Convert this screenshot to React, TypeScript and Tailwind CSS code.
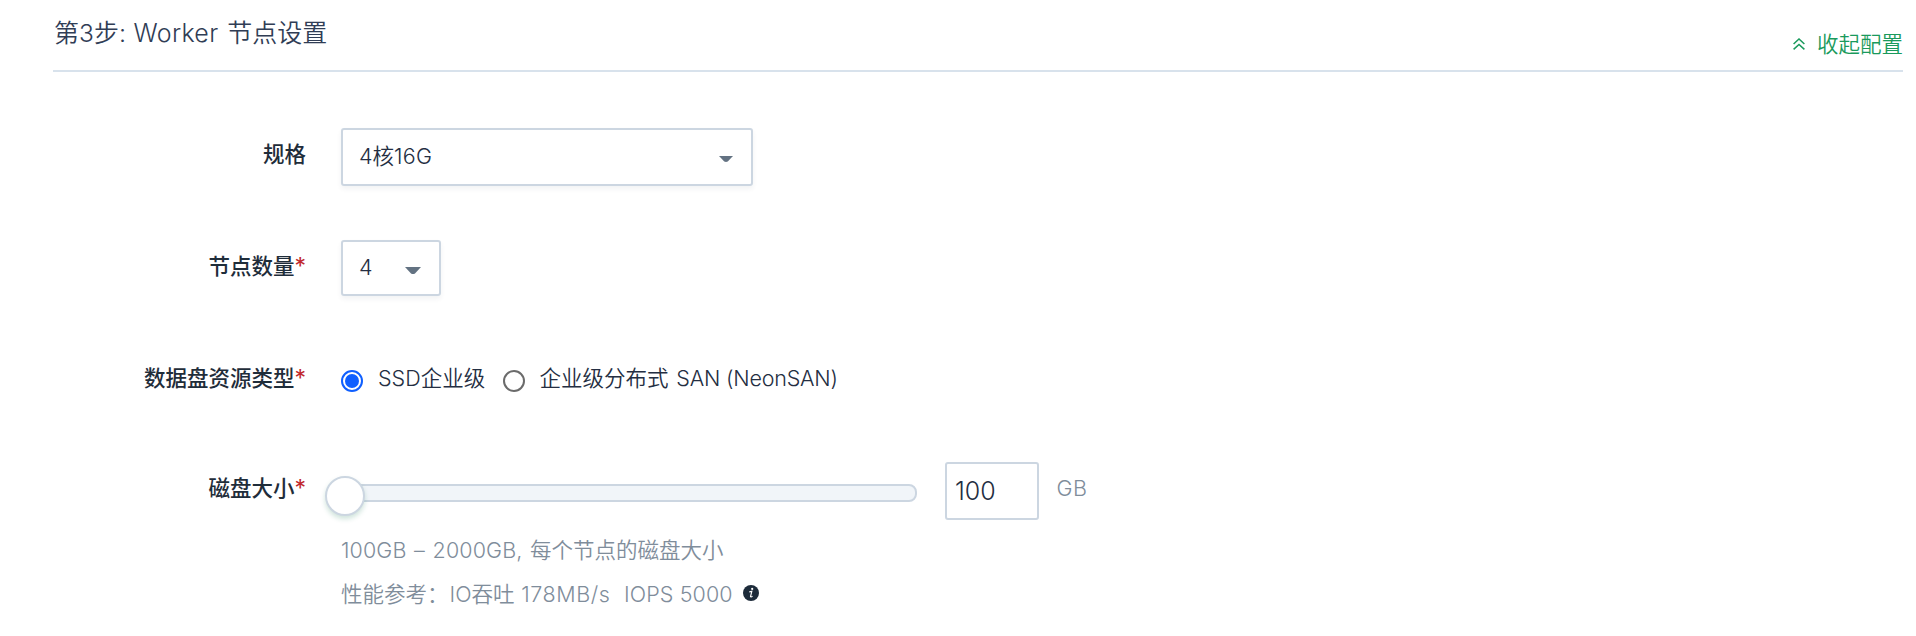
import type { ReactNode } from "react";

function Caret({ className }: { className: string }) {
  return (
    <svg viewBox="0 0 16 7" preserveAspectRatio="none" className={className} fill="#637282">
      <path d="M0 0h16L10 6.4Q8 7.4 6 6.4Z" />
    </svg>
  );
}

function Row({ label, required, className, children }: { label: string; required?: boolean; className: string; children: ReactNode }) {
  return (
    <div className={`flex items-start ${className}`}>
      <div className="flex h-8 w-[306px] shrink-0 items-center justify-end font-medium text-[#1f2d3a]">
        {label}
        {required && <span className="w-[11.5px] text-[23px] font-normal text-[#c1272d]">*</span>}
      </div>
      <div className="ml-[35px] flex grow items-start">{children}</div>
    </div>
  );
}

export default function App() {
  return (
    <div className="h-[636px] overflow-hidden bg-white font-['Inter','Noto_Sans_CJK_SC',sans-serif] text-[21.5px] leading-8 font-[350] whitespace-pre text-[#242e42]">
      <header className="ml-[53px] flex h-[72px] w-[1850px] items-start justify-between border-b-2 border-[#d8e2ec]">
        <h1 className="pt-[17px] pl-[1px] text-[25px] font-[350] text-[#303d55]">
          第<span className="text-[24.5px]">3</span>步<span className="tracking-[0.3px]">: Worker </span><span className="ml-[1.5px]">节点设置</span>
        </h1>
        <button className="flex items-center pt-[28px] font-[350] text-[#1a9a5c]">
          <svg viewBox="0 0 12 12" className="mr-3 size-3" fill="none" stroke="currentColor" strokeWidth="1.5">
            <path d="M.6 6 6 1l5.4 5M.6 11.4 6 6.4l5.4 5" />
          </svg>
          收起配置
        </button>
      </header>

      <Row label="规格" className="mt-[56px] h-[112px] [&>div:first-child]:mt-[10px]">
        <div className="flex h-[58px] w-[412px] items-center justify-between rounded-[3px] border-2 border-[#ccd6e1] pr-[18px] pl-[16px] shadow-[0_3px_5px_rgba(36,46,66,0.06)]">
          <span className="-mt-[2px]">4核<span className="tracking-[0.3px]">16G</span></span>
          <Caret className="mt-[4px] h-[6px] w-[14px]" />
        </div>
      </Row>

      <Row label="节点数量" required className="h-[122px] [&>div:first-child]:mt-[10px]">
        <div className="flex h-[56px] w-[100px] items-center justify-between rounded-[3px] border-2 border-[#ccd6e1] pr-[18px] pl-[16px] shadow-[0_3px_5px_rgba(36,46,66,0.06)]">
          <span className="-mt-[3px]">4</span>
          <Caret className="mt-[5px] h-[7px] w-[16px]" />
        </div>
      </Row>

      <Row label="数据盘资源类型" required className="h-[100px]">
        <span className="mt-[8px] flex size-[22px] items-center justify-center rounded-full border-2 border-[#0f5fff]">
          <span className="size-[14px] rounded-full bg-[#0f5fff]" />
        </span>
        <span className="ml-[15px] w-[110px]">SSD企业级</span>
        <span className="mt-[8px] ml-[14.5px] size-[22px] rounded-full border-2 border-[#6b6b6b]" />
        <span className="ml-[15px]">
          企业级分布式<span className="ml-[2px] tracking-[-0.2px]"> SAN (NeonSAN)</span>
        </span>
      </Row>

      <Row label="磁盘大小" required className="h-[72px] [&>div:first-child]:mt-[10px]">
        <div className="relative mt-[22px] h-[18px] w-[576px] rounded-[8px] border-2 border-[#ccd6e1] bg-[#f1f5f9]">
          <span className="absolute -top-[10px] -left-[18px] size-10 rounded-full border-2 border-[#ccd6e1] bg-white shadow-[0_3px_5px_rgba(20,120,80,0.2)]" />
        </div>
        <div className="ml-[28px] flex h-[58px] w-[94px] items-center rounded-[3px] border-2 border-[#ccd6e1] pl-[8px] text-[25px]">100</div>
        <span className="mt-[10px] ml-[17.5px] tracking-[0.5px] text-[#7f8d9b]">GB</span>
      </Row>

      <div className="ml-[341px] text-[#7f8d9b]">
        <p>
          <span className="tracking-[0.1px] [word-spacing:1.5px]">100GB – 2000GB, </span>每个节点的磁盘大小
        </p>
        <p className="mt-[12px] flex items-center">
          性能参考：<span className="ml-[1px]">IO</span>吞吐<span className="tracking-[0.6px]"> 178MB/s</span>
          <span className="ml-[13.5px] tracking-[0.1px]">IOPS 5000</span>
          <svg viewBox="0 0 16 16" className="-mt-[3px] ml-[10px] size-4">
            <circle cx="8" cy="8" r="8" fill="#1d2b3a" />
            <circle cx="9.2" cy="3.9" r="1.1" fill="#fff" />
            <path d="M6.3 6.8 8.8 6.3 7.5 11.6Q7.8 12.5 9.5 11.3" fill="none" stroke="#fff" strokeWidth="1.2" />
          </svg>
        </p>
      </div>
    </div>
  );
}
